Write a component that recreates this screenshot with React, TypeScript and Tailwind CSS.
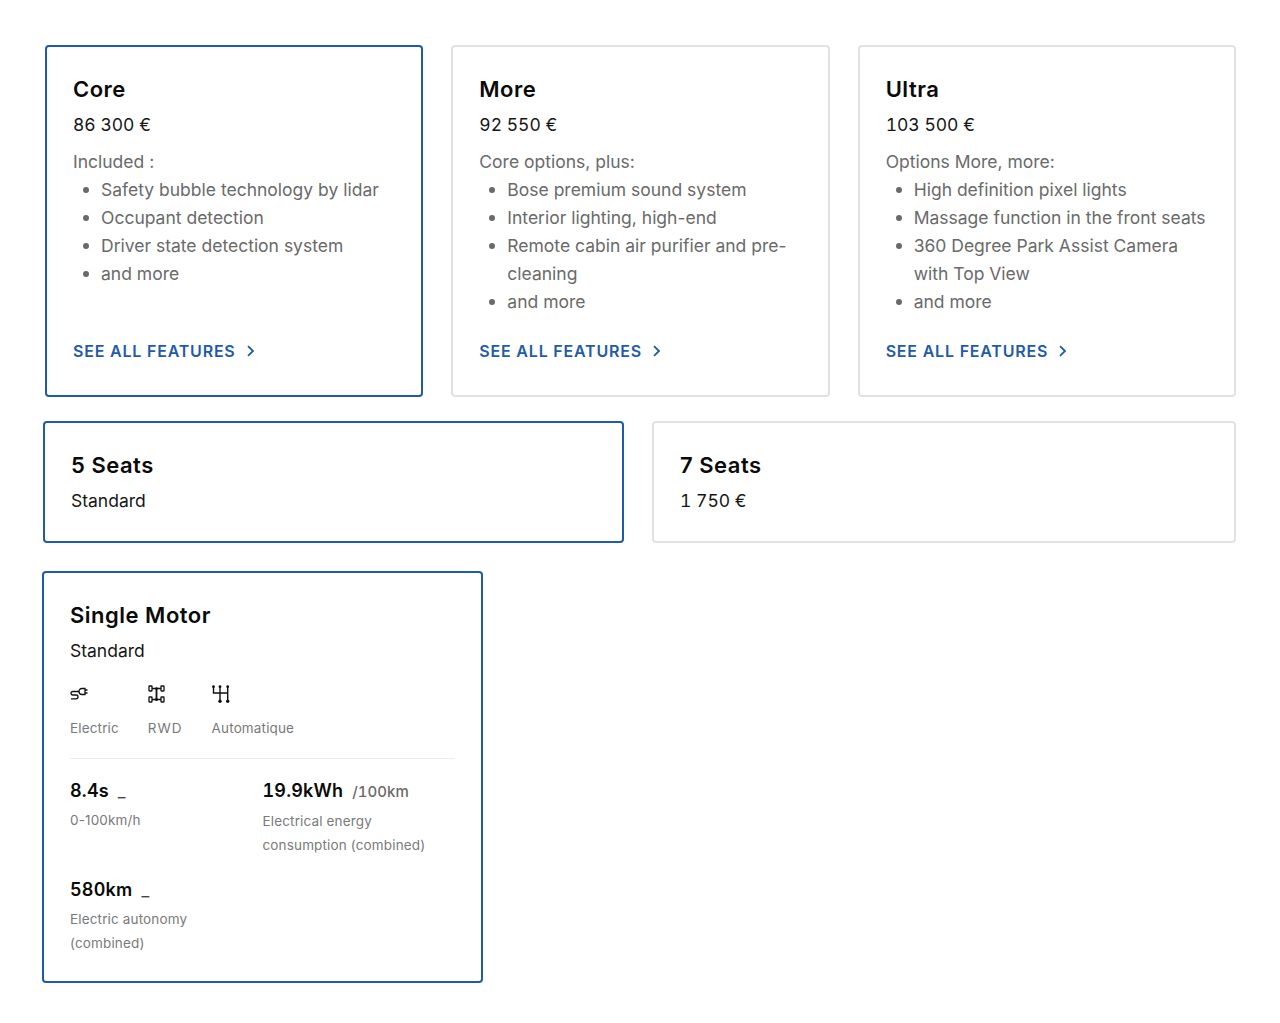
const font = { fontFamily: '"Inter", "Liberation Sans", sans-serif' };

function Chevron() {
  return (
    <svg width="10" height="12" viewBox="0 0 10 12" fill="none" stroke="#1f5ba8" strokeWidth="1.8">
      <path d="M2 1.200 7 6l-5 4.800" />
    </svg>
  );
}

function PlugIcon() {
  return (
    <svg width="18" height="14" viewBox="0 0 18 14" fill="none" stroke="#111" strokeWidth="1.300">
      <path d="M9 4.500H3C1.500 4.500 1 5.300 1 6.200S1.500 8 3 8H6C7.500 8 8 8.800 8 9.800S7.500 11.800 6 11.800H1" />
      <path d="M12 1.500H15V7.500H12C10 7.500 9 6 9 4.500S10 1.500 12 1.500Z" />
      <path d="M15 3H17.500M15 6H17.500" />
    </svg>
  );
}

function DriveIcon() {
  return (
    <svg width="17" height="18" viewBox="0 0 17 18" fill="none" stroke="#111" strokeWidth="1.300">
      <rect x="1" y="1" width="3" height="5" rx="0.500" />
      <rect x="13" y="1" width="3" height="5" rx="0.500" />
      <rect x="1" y="12" width="3" height="5" rx="0.500" />
      <rect x="13" y="12" width="3" height="5" rx="0.500" />
      <path d="M4 3.500h9M4 14.500h9" />
      <path d="M8.500 3.500v11" strokeWidth="1.800" />
      <circle cx="8.500" cy="3.500" r="1.300" fill="#111" stroke="none" />
      <circle cx="8.500" cy="14.500" r="1.500" fill="#111" stroke="none" />
    </svg>
  );
}

function GearIcon() {
  return (
    <svg width="18" height="18" viewBox="0 0 18 18" fill="none" stroke="#111" strokeWidth="1.400">
      <path d="M1.500 1.700V8H15.700M8 1.700V16.700M15.700 1.700V16.700" />
      <circle cx="1.500" cy="1.700" r="1.400" fill="#111" stroke="none" />
      <circle cx="8" cy="1.700" r="1.400" fill="#111" stroke="none" />
      <circle cx="15.700" cy="1.700" r="1.400" fill="#111" stroke="none" />
      <circle cx="8" cy="16.300" r="1.700" fill="#111" stroke="none" />
      <circle cx="15.700" cy="16.300" r="1.700" fill="#111" stroke="none" />
    </svg>
  );
}

function TrimCard({ title, price, intro, items, selected }: { title: string; price: string; intro: string; items: string[]; selected?: boolean }) {
  return (
    <div className={`flex flex-col rounded-[4px] border-2 px-[26px] pt-[26px] pb-[32px] ${selected ? "border-[#1f5ba8]" : "border-[#e2e2e2]"}`}>
      <h3 className="text-[22px] leading-[32px] font-semibold tracking-[0.5px] text-[#0a0a0a]">{title}</h3>
      <div className="mt-[4px] text-[17.5px] leading-[32px] text-[#161616] tabular-nums">{price}</div>
      <div className="mt-[7px] text-[17.5px] leading-[28px] text-[#6a6a6a]">{intro}</div>
      <ul className="text-[17.5px] leading-[28px] text-[#6a6a6a]">
        {items.map((item) => (
          <li key={item} className="relative pl-[28px]">
            <span className="absolute left-[10px] top-[11px] h-[6px] w-[6px] rounded-full bg-[#6a6a6a]" />
            {item}
          </li>
        ))}
      </ul>
      <a className="mt-auto flex items-center gap-[10px] text-[16px] leading-[24px] font-semibold tracking-[0.8px] text-[#1f5ba8]">
        SEE ALL FEATURES <Chevron />
      </a>
    </div>
  );
}

function SeatCard({ title, price, selected, className }: { title: string; price: string; selected?: boolean; className: string }) {
  return (
    <div className={`h-[122px] rounded-[4px] border-2 px-[26px] pt-[26px] ${selected ? "border-[#1f5ba8]" : "border-[#e2e2e2]"} ${className}`}>
      <h3 className="text-[22px] leading-[32px] font-semibold tracking-[0.5px] text-[#0a0a0a]">{title}</h3>
      <div className="mt-[4px] text-[17.5px] leading-[32px] text-[#161616] tabular-nums">{price}</div>
    </div>
  );
}

function Stat({ value, unit, label, dash }: { value: string; unit: string; label: string; dash?: boolean }) {
  return (
    <div>
      <div className="flex items-baseline gap-[9px] leading-[24px]">
        <span className="text-[18px] font-semibold tracking-[0.2px] text-[#0a0a0a] tabular-nums">{value}</span>
        <span className={dash ? "text-[17px] text-[#444]" : "text-[15px] font-medium text-[#6a6a6a] tabular-nums"}>{unit}</span>
      </div>
      <div className="mt-[5px] text-[13.5px] leading-[24px] tracking-[0.15px] text-[#7a7a7a]">{label}</div>
    </div>
  );
}

export default function App() {
  return (
    <div style={font} className="h-[1023px] bg-white pt-[45px] pr-[44px]">
      <div className="ml-[45px] grid h-[352px] grid-cols-3 gap-[28px]">
        <TrimCard
          selected
          title="Core"
          price="86 300 €"
          intro="Included :"
          items={["Safety bubble technology by lidar", "Occupant detection", "Driver state detection system", "and more"]}
        />
        <TrimCard
          title="More"
          price="92 550 €"
          intro="Core options, plus:"
          items={["Bose premium sound system", "Interior lighting, high-end", "Remote cabin air purifier and pre-cleaning", "and more"]}
        />
        <TrimCard
          title="Ultra"
          price="103 500 €"
          intro="Options More, more:"
          items={["High definition pixel lights", "Massage function in the front seats", "360 Degree Park Assist Camera with Top View", "and more"]}
        />
      </div>

      <div className="mt-[24px] ml-[43px] flex gap-[28px]">
        <SeatCard selected title="5 Seats" price="Standard" className="w-[581px]" />
        <SeatCard title="7 Seats" price="1 750 €" className="flex-1" />
      </div>

      <div className="mt-[28px] ml-[42px] h-[412px] w-[441px] rounded-[4px] border-2 border-[#1f5ba8] px-[26px] pt-[26px]">
        <h3 className="text-[22px] leading-[32px] font-semibold tracking-[0.5px] text-[#0a0a0a]">Single Motor</h3>
        <div className="mt-[4px] text-[17.5px] leading-[32px] text-[#161616]">Standard</div>

        <div className="mt-[15px] flex gap-[29px] border-b border-[#ececec] pb-[18px] text-[13.5px] leading-[24px] tracking-[0.15px] text-[#7a7a7a]">
          <div>
            <div className="flex h-[24px] items-center"><PlugIcon /></div>
            <div className="mt-[10px]">Electric</div>
          </div>
          <div>
            <div className="flex h-[24px] items-center"><DriveIcon /></div>
            <div className="mt-[10px] tracking-[1px]">RWD</div>
          </div>
          <div>
            <div className="flex h-[24px] items-center"><GearIcon /></div>
            <div className="mt-[10px]">Automatique</div>
          </div>
        </div>

        <div className="mt-[20px] grid grid-cols-2 gap-y-[21px]">
          <Stat dash value="8.4s" unit="_" label="0-100km/h" />
          <Stat value="19.9kWh" unit="/100km" label="Electrical energy consumption (combined)" />
          <Stat dash value="580km" unit="_" label="Electric autonomy (combined)" />
        </div>
      </div>
    </div>
  );
}
